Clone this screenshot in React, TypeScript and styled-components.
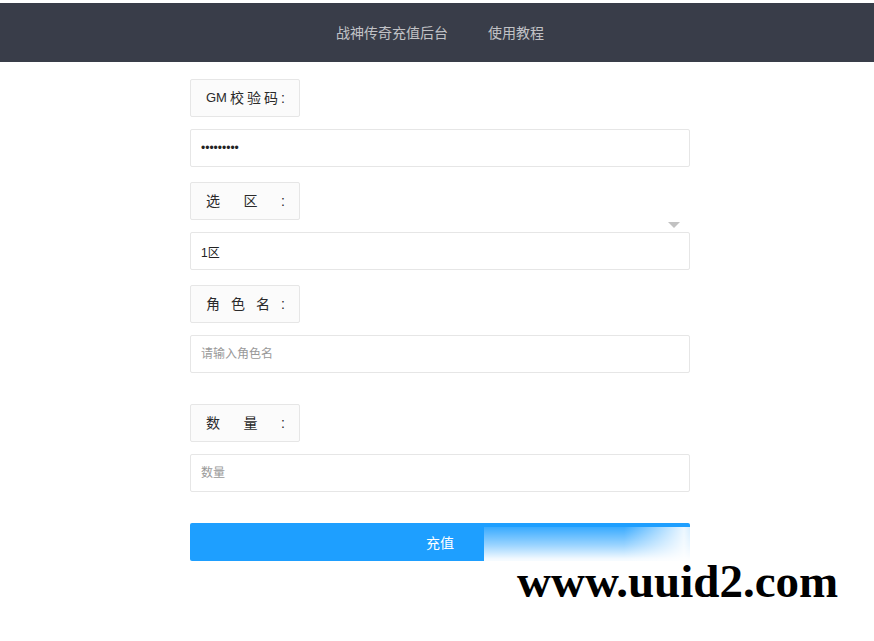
import React from "react";
import styled, { createGlobalStyle } from "styled-components";

const Global = createGlobalStyle`
  html, body { margin: 0; padding: 0; background: #fff; }
  body { font-family: "Liberation Sans", "Noto Sans CJK SC", sans-serif; color: #333; }
  * { box-sizing: border-box; }
`;

const Page = styled.div`
  position: relative;
  width: 874px;
  min-height: 641px;
  padding-top: 3px;
  overflow: hidden;
`;

const Header = styled.header`
  height: 59px;
  background: #393d49;
  display: flex;
  justify-content: center;
  align-items: center;
  padding-left: 6px;
`;

const NavItem = styled.a`
  padding: 0 20px;
  font-size: 14px;
  line-height: 59px;
  color: rgba(255, 255, 255, 0.7);
  text-decoration: none;
  font-family: "Noto Sans CJK SC", sans-serif;
`;

const Form = styled.form`
  width: 500px;
  margin: 17px 0 0 190px;
  display: flex;
  flex-direction: column;
`;

const Label = styled.div<{ $gap: number }>`
  width: 110px;
  height: 38px;
  margin-top: ${(p) => p.$gap}px;
  padding: 8px 14px 8px 15px;
  border: 1px solid #e6e6e6;
  border-radius: 2px;
  background: #fbfbfb;
  display: flex;
  justify-content: space-between;
  align-items: center;
  font-size: 14px;
  line-height: 20px;
  color: #2a2a2a;
`;

const Latin = styled.span`
  font-family: "Liberation Sans", sans-serif;
  font-size: 13px;
`;

const Field = styled.div`
  position: relative;
  margin-top: 12px;
`;

const Input = styled.input`
  display: block;
  width: 500px;
  height: 38px;
  padding: 0 10px;
  border: 1px solid #e6e6e6;
  border-radius: 2px;
  background: #fff;
  font-family: "Liberation Sans", "Noto Sans CJK SC", sans-serif;
  font-size: 12px;
  color: #222;
  outline: none;
  &::placeholder { color: #999; }
`;

const Arrow = styled.i`
  position: absolute;
  right: 10px;
  top: -10px;
  width: 0;
  height: 0;
  border-style: solid;
  border-width: 6px 6px 0 6px;
  border-color: #c2c2c2 transparent transparent transparent;
`;

const Button = styled.button`
  margin-top: 31px;
  width: 500px;
  height: 38px;
  border: none;
  border-radius: 2px;
  background: #1e9fff;
  color: #fff;
  font-size: 14px;
  font-family: "Noto Sans CJK SC", sans-serif;
  line-height: 38px;
  padding: 0;
`;

const Veil = styled.div`
  position: absolute;
  left: 484px;
  top: 527px;
  width: 250px;
  height: 90px;
  background: linear-gradient(
    to bottom,
    rgba(255, 255, 255, 0.12) 0px,
    rgba(255, 255, 255, 0.55) 18px,
    rgba(255, 255, 255, 0.95) 32px,
    #fff 40px
  );
  &::after {
    content: "";
    position: absolute;
    inset: 0;
    background: linear-gradient(
      to right,
      rgba(255, 255, 255, 0) 140px,
      rgba(255, 255, 255, 0.9) 200px,
      rgba(255, 255, 255, 0) 250px
    );
  }
`;

const Mark = styled.div`
  position: absolute;
  left: 517px;
  top: 558px;
  font-family: "Liberation Serif", serif;
  font-weight: 700;
  font-size: 47px;
  line-height: 47px;
  color: #000;
`;

const Chars = ({ items }: { items: string[] }) => (
  <>
    {items.map((c, i) => (
      <span key={i}>{c}</span>
    ))}
  </>
);

export default function App() {
  return (
    <Page>
      <Global />
      <Header>
        <NavItem>战神传奇充值后台</NavItem>
        <NavItem>使用教程</NavItem>
      </Header>
      <Form onSubmit={(e) => e.preventDefault()}>
        <Label $gap={0}>
          <Latin>GM</Latin>
          <Chars items={["校", "验", "码", ":"]} />
        </Label>
        <Field>
          <Input type="password" defaultValue="123456789" readOnly />
        </Field>
        <Label $gap={15}>
          <Chars items={["选", "区", ":"]} />
        </Label>
        <Field>
          <Arrow />
          <Input type="text" defaultValue="1区" readOnly />
        </Field>
        <Label $gap={15}>
          <Chars items={["角", "色", "名", ":"]} />
        </Label>
        <Field>
          <Input type="text" placeholder="请输入角色名" />
        </Field>
        <Label $gap={31}>
          <Chars items={["数", "量", ":"]} />
        </Label>
        <Field>
          <Input type="text" placeholder="数量" />
        </Field>
        <Button type="submit">充值</Button>
      </Form>
      <Veil />
      <Mark>www.uuid2.com</Mark>
    </Page>
  );
}
